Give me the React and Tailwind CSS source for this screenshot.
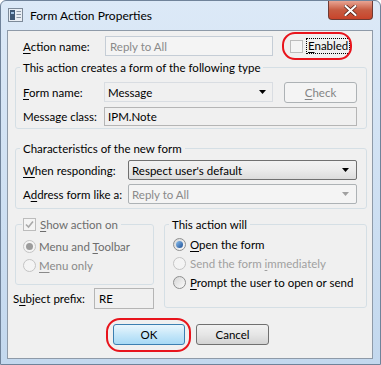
import React from "react";

const font = "font-['Lato',sans-serif]";

function U({ children }) {
  return <span className="underline underline-offset-2">{children}</span>;
}

function Check({ checked, disabled }) {
  return (
    <span
      className={`flex h-[13px] w-[13px] shrink-0 items-center justify-center border ${
        disabled ? "border-[#bcbcbc] bg-[#f4f4f4]" : "border-[#8e8f8f] bg-gradient-to-br from-[#dcdcdc] to-[#fbfbfb]"
      }`}
    >
      {checked && (
        <svg width="9" height="9" viewBox="0 0 9 9">
          <path d="M1 4.5 L3.5 7 L8 1.5" fill="none" stroke={disabled ? "#a9a9a9" : "#4a5f97"} strokeWidth="1.6" />
        </svg>
      )}
    </span>
  );
}

function Radio({ checked, disabled }) {
  return (
    <span
      className={`flex h-[13px] w-[13px] shrink-0 items-center justify-center rounded-full border ${
        disabled ? "border-[#c4c4c4] bg-[#f4f4f4]" : "border-[#8e8f8f] bg-gradient-to-br from-[#d6d6d6] to-[#fbfbfb]"
      }`}
    >
      {checked && (
        <span
          className={`h-[7px] w-[7px] rounded-full ${
            disabled ? "bg-[#9c9c9c]" : "bg-gradient-to-br from-[#8fc3f0] to-[#1d4f96]"
          }`}
        />
      )}
    </span>
  );
}

function Arrow({ disabled }) {
  return (
    <svg width="7" height="4" viewBox="0 0 7 4">
      <path d="M0 0 H7 L3.5 4 Z" fill={disabled ? "#a0a0a0" : "#000"} />
    </svg>
  );
}

// legend sits inside the fieldset padding, so pull it back with a negative margin
function Group({ legend, className, legendClass = "-ml-[3px]", children }) {
  return (
    <fieldset className={`rounded-[3px] border border-[#d5dfe5] ${className}`}>
      <legend className={`flex items-center px-[3px] leading-[15px] whitespace-nowrap ${legendClass}`}>{legend}</legend>
      {children}
    </fieldset>
  );
}

function Btn({ children, def, disabled, className }) {
  let look = "border-[#707070] bg-gradient-to-b from-[#f2f2f2] via-[#e6e6e6] to-[#d3d3d3] text-black";
  if (def) look = "border-[#3c7fb1] bg-gradient-to-b from-[#eaf6fd] via-[#c6e7f9] to-[#a7d9f5] text-black";
  if (disabled) look = "border-[#adb2b5] bg-[#f4f4f4] text-[#838383]";
  return (
    <div className={`flex h-[21px] items-center justify-center rounded-[3px] border ${look} ${className}`}>
      {children}
    </div>
  );
}

function Row({ label, labelW, className, children }) {
  return (
    <div className={`flex items-center ${className}`}>
      <span className="shrink-0 whitespace-nowrap" style={{ width: labelW }}>
        {label}
      </span>
      {children}
    </div>
  );
}

export default function App() {
  return (
    <div className={`${font} relative h-[365px] w-[381px] overflow-hidden rounded-t-[6px] border border-[#70839a] bg-gradient-to-b from-[#dce9f7] to-[#c3d8ee] text-[11.5px] leading-[15px] text-black`}>
      {/* Title bar */}
      <div className="flex h-[29px] items-start">
        <svg className="ml-[7px] mt-[7px]" width="15" height="14" viewBox="0 0 15 14">
          <rect x="0.5" y="0.5" width="14" height="13" fill="#e9eef4" stroke="#7d8a99" />
          <rect x="2" y="2" width="5" height="10" fill="#3e5774" />
          <rect x="3" y="4" width="3" height="2" fill="#9fc0e0" />
          <rect x="8.5" y="3" width="4.5" height="1" fill="#8a96a4" />
          <rect x="8.5" y="6" width="4.5" height="1" fill="#8a96a4" />
          <rect x="8.5" y="9" width="4.5" height="1" fill="#8a96a4" />
        </svg>
        <span className="ml-[7px] mt-[7px] text-[12px]">Form Action Properties</span>
        <div className="ml-auto mr-[7px] flex h-[19px] w-[45px] items-center justify-center rounded-b-[4px] border border-t-0 border-[#6e3a33] bg-gradient-to-b from-[#e8a493] via-[#c75b41] to-[#c8432a]">
          <svg width="13" height="11" viewBox="0 0 13 11">
            <path d="M1.5 1 L11.5 10 M11.5 1 L1.5 10" stroke="#4b1d16" strokeWidth="3.6" strokeLinecap="round" />
            <path d="M1.5 1 L11.5 10 M11.5 1 L1.5 10" stroke="#fff" strokeWidth="2.2" strokeLinecap="round" />
          </svg>
        </div>
      </div>

      {/* Client area */}
      <div className="ml-[6px] h-[329px] w-[366px] border border-[#8e9aa8] bg-[#f0f0f0] pl-[7px] pr-[5px]">
        {/* Action name */}
        <div className="relative mt-[5px] flex h-[20px] items-center pl-[8px]">
          <span className="w-[82px] shrink-0">
            <U>A</U>ction name:
          </span>
          <div className="flex h-[20px] w-[168px] items-center border border-[#c5cdd6] bg-[#f4f4f4] pl-[4px] text-[#8a8a8a]">
            Reply to All
          </div>
          <div className="ml-[17px] flex items-center">
            <Check disabled />
            <span className="ml-[3px] border border-dotted border-black px-[1px] leading-[14px]">
              <U>E</U>nabled
            </span>
          </div>
          <div className="absolute left-[267px] top-[-4px] h-[28px] w-[70px] rounded-[13px] border-2 border-[#e8141c]" />
        </div>

        {/* Group 1 */}
        <Group className="mt-[4px] pb-[2px] pl-[7px]" legend="This action creates a form of the following type">
          <Row className="mt-[7px] h-[20px]" labelW={81} label={<><U>F</U>orm name:</>}>
            <div className="flex h-[20px] w-[169px] items-center justify-between border border-[#d9dde2] pl-[3px] pr-[6px]">
              <span>Message</span>
              <Arrow />
            </div>
            <Btn disabled className="ml-[11px] w-[73px]">
              <U>C</U>heck
            </Btn>
          </Row>
          <Row className="mt-[5px] h-[19px]" labelW={81} label="Message class:">
            <div className="flex h-[19px] w-[253px] items-center border border-[#b5b5b5] pl-[3px]">IPM.Note</div>
          </Row>
        </Group>

        {/* Group 2 */}
        <Group className="mt-[12px] pb-[4px] pl-[7px]" legend="Characteristics of the new form">
          <Row className="mt-[4px] h-[20px]" labelW={105} label={<><U>W</U>hen responding:</>}>
            <div className="flex h-[20px] w-[229px] items-center justify-between rounded-[2px] border border-[#707070] bg-gradient-to-b from-[#f2f2f2] via-[#ebebeb] to-[#dcdcdc] pl-[3px] pr-[7px]">
              <span>Respect user's default</span>
              <Arrow />
            </div>
          </Row>
          <Row className="mt-[4px] h-[20px]" labelW={105} label={<>A<U>d</U>dress form like a:</>}>
            <div className="flex h-[20px] w-[229px] items-center justify-between rounded-[2px] border border-[#adb2b5] bg-[#f4f4f4] pl-[3px] pr-[7px] text-[#8a8a8a]">
              <span>Reply to All</span>
              <Arrow disabled />
            </div>
          </Row>
        </Group>

        {/* Groups 3 and 4 */}
        <div className="mt-[8px] flex items-start gap-[10px]">
          <div className="flex w-[139px] flex-col">
            <Group
              className="pb-[9px] pl-[7px] text-[#6d6d6d]"
              legendClass="-ml-[1px] pr-[3px] pl-[1px]"
              legend={
                <>
                  <Check checked disabled />
                  <span className="ml-[4px]">
                    <U>S</U>how action on
                  </span>
                </>
              }
            >
              <div className="mt-[5px] flex h-[19px] items-center">
                <Radio checked disabled />
                <span className="ml-[3px]">
                  Menu and <U>T</U>oolbar
                </span>
              </div>
              <div className="flex h-[19px] items-center">
                <Radio disabled />
                <span className="ml-[3px] text-[#8a8a8a]">
                  <U>M</U>enu only
                </span>
              </div>
            </Group>
            <div className="-ml-[2px] mt-[3px] flex h-[21px] items-center">
              <span className="w-[81px] shrink-0">
                S<U>u</U>bject prefix:
              </span>
              <div className="flex h-[21px] w-[60px] items-center border border-[#b5b5b5] pl-[4px]">RE</div>
            </div>
          </div>

          <Group className="w-[205px] pb-[15px] pl-[8px]" legendClass="-ml-[4px]" legend="This action will">
            <div className="mt-[3px] flex h-[19px] items-center">
              <Radio checked />
              <span className="ml-[4px]">
                <U>O</U>pen the form
              </span>
            </div>
            <div className="flex h-[19px] items-center text-[#a0a0a0]">
              <Radio disabled />
              <span className="ml-[4px]">
                Send the form <U>i</U>mmediately
              </span>
            </div>
            <div className="flex h-[19px] items-center">
              <Radio />
              <span className="ml-[4px] whitespace-nowrap">
                <U>P</U>rompt the user to open or send
              </span>
            </div>
          </Group>
        </div>

        {/* Buttons */}
        <div className="relative mt-[15px] flex pl-[98px]">
          <Btn def className="w-[72px]">
            OK
          </Btn>
          <Btn className="ml-[11px] w-[73px]">Cancel</Btn>
          <div className="absolute left-[91px] top-[-6px] h-[34px] w-[85px] rounded-[14px] border-2 border-[#e8141c]" />
        </div>
      </div>
    </div>
  );
}
